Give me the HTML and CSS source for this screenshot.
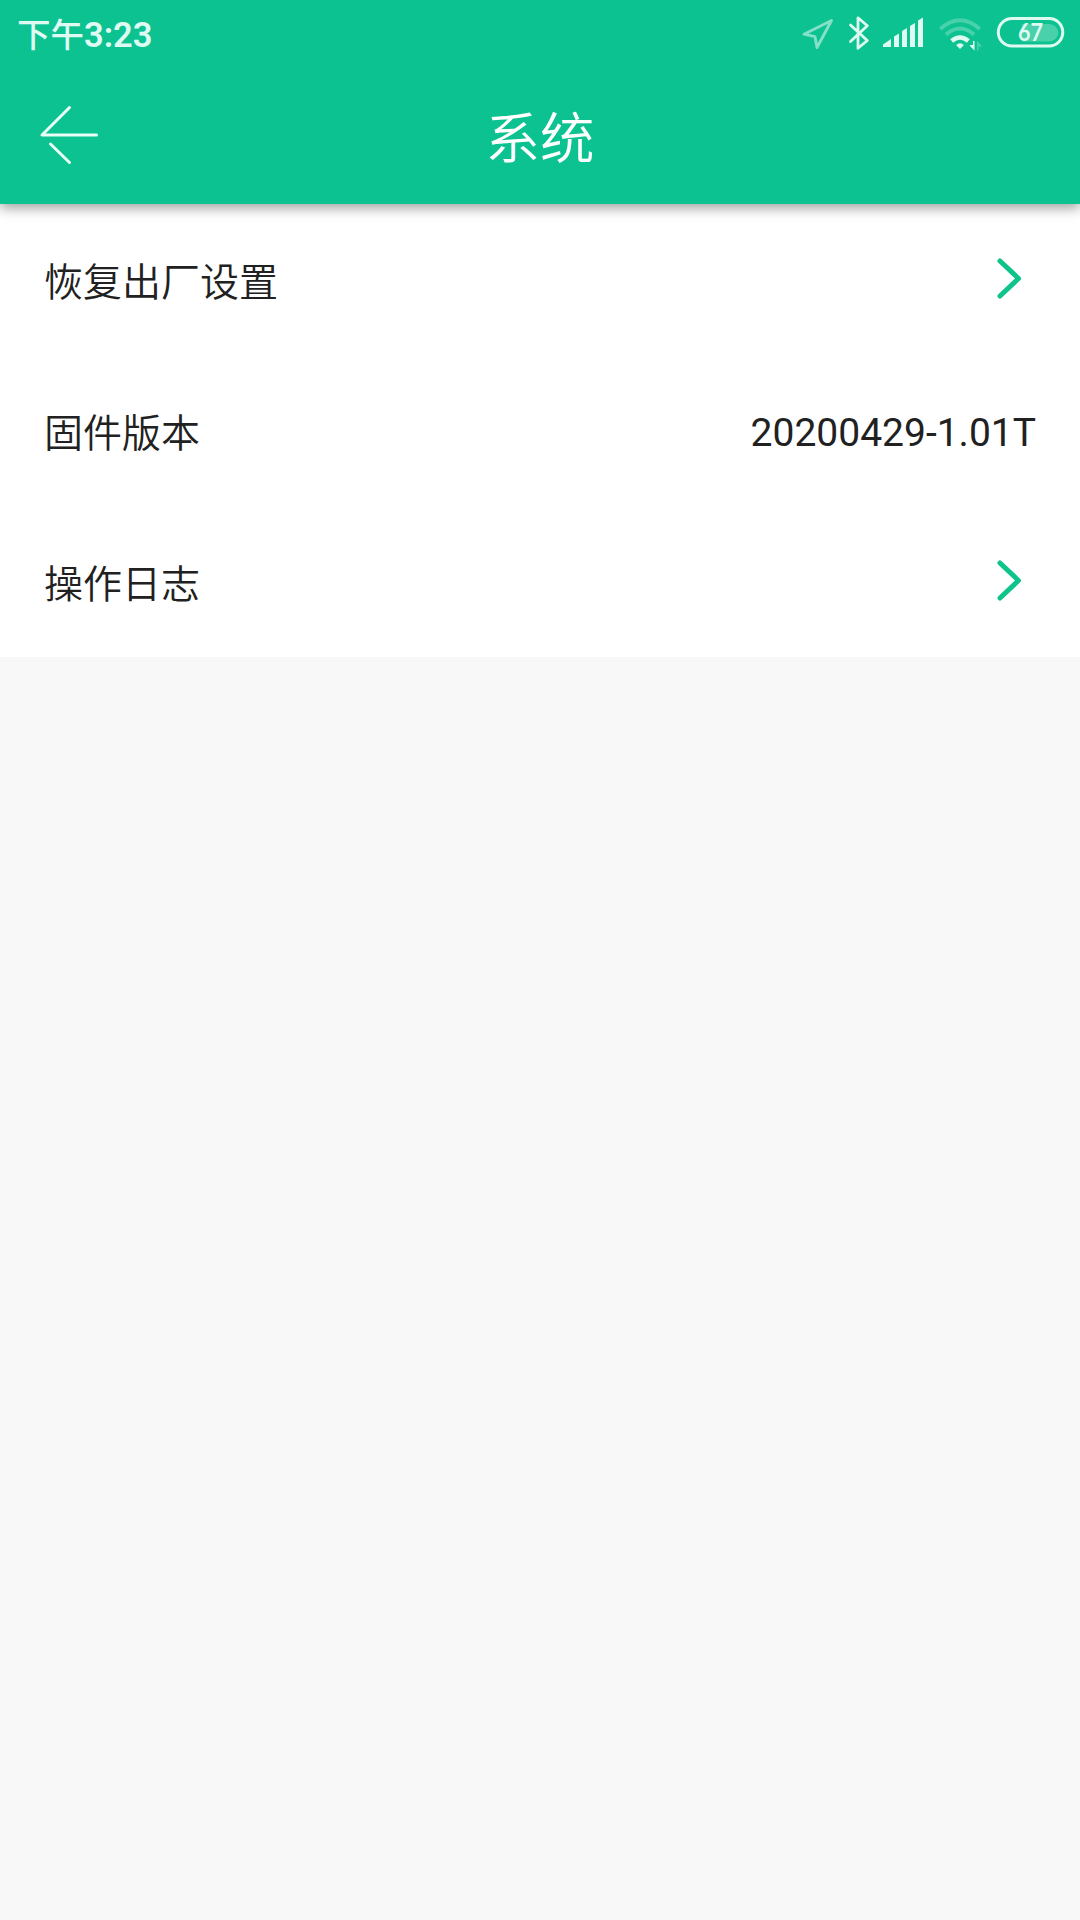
FILE: index.html
```html
<!DOCTYPE html>
<html lang="zh-CN">
<head>
<meta charset="utf-8">
<title>系统</title>
<link rel="stylesheet" href="styles.css">
</head>
<body>
<header class="header">
  <div class="status">
    <span class="time">下午<b class="digits">3:23</b></span>
    <svg class="status-icons" width="280" height="66" viewBox="0 0 280 66" fill="none">
      <path class="faint-line" d="M31.5 20.5 L4 34.2 L15 36.7 L17 47.5 Z" stroke-width="2.9" stroke-linejoin="round"/>
      <path class="line" d="M50.5 25 L67.3 40.5 L58 48.3 V17.8 L67.3 25.8 L50.5 41.5" stroke-width="2.8" stroke-linejoin="round" stroke-linecap="round"/>
      <path class="solid" d="M83 47 V44.5 L91 39 V47Z M94 47 V36.5 L99 33.5 V47Z M102 47 V31 L107 28 V47Z M110 47 V26 L115 23 V47Z M118 47 V20.5 L123 17.5 V47Z"/>
      <path class="dim-line" d="M140.300 29 Q160 11.500 179.700 29 M146 34.500 Q160 22.500 174 34.500" stroke-width="4"/>
      <path class="line" d="M151.700 41 Q160 34 168.300 41" stroke-width="4.500"/>
      <path class="solid" d="M156 45 Q160 41.500 164 45 L160 49Z M173 41 H174.500 V50.500 L170 46 V45 H173Z"/>
      <path class="dim" d="M177 41 L181.500 45.500 V46.500 H178.500 V50.500 H177Z"/>
      <path class="dim" d="M222 24 H249.500 A8.700 8.700 0 0 1 249.500 41.400 H222Z"/>
      <rect class="line" x="198.300" y="18.500" width="64.500" height="27.500" rx="13.700" stroke-width="3"/>
      <text class="charge" x="218" y="41" textLength="25" lengthAdjust="spacingAndGlyphs">67</text>
    </svg>
  </div>
  <div class="toolbar">
    <svg class="back" width="60" height="60" viewBox="0 0 60 60" fill="none" stroke="#eafff8" stroke-width="3" stroke-linecap="round" stroke-linejoin="round">
      <path d="M31.500 2.500 L4 30 H58.500 M12.500 39 L31.500 57.500"/>
    </svg>
    <h1 class="title">系统</h1>
  </div>
</header>
<main class="list">
  <div class="row">
    <span class="label">恢复出厂设置</span>
    <svg class="chevron" width="26" height="42" viewBox="0 0 26 42"><path d="M3 4 L21.500 21.500 L3 39"/></svg>
  </div>
  <div class="row">
    <span class="label">固件版本</span>
    <span class="value">20200429-1.01T</span>
  </div>
  <div class="row">
    <span class="label">操作日志</span>
    <svg class="chevron" width="26" height="42" viewBox="0 0 26 42"><path d="M3 4 L21.500 21.500 L3 39"/></svg>
  </div>
</main>
</body>
</html>
```
FILE: styles.css
```css
* { box-sizing: border-box; }
body {
  margin: 0;
  min-height: 1920px;
  background: #f8f8f8;
  font-family: Roboto, "Noto Sans CJK SC", sans-serif;
  color: #212121;
}
.header {
  position: relative;
  height: 204px;
  background: #0cc291;
  box-shadow: 0 4px 12px rgba(0, 0, 0, .38);
}
.status {
  height: 66px;
  display: flex;
  justify-content: space-between;
  padding-left: 17px;
}
.time {
  font-size: 33.5px;
  line-height: 70px;
  font-weight: 500;
  color: #dffaf1;
}
.digits { font-size: 34.5px; font-weight: 600; }
.line { stroke: #dffaf1; }
.solid { fill: #dffaf1; }
.faint-line { stroke: #84e0c7; }
.dim { fill: #49d1ab; }
.dim-line { stroke: #49d1ab; }
.charge {
  fill: #dffaf1;
  font: bold 25px Lato, sans-serif;
}
.toolbar {
  height: 138px;
  display: grid;
  grid-template-columns: 120px 1fr 120px;
}
.back { margin: 39px 0 0 38px; }
.title {
  margin: 0;
  text-align: center;
  font-size: 54.5px;
  line-height: 147px;
  font-weight: 350;
  color: #fff;
}
.list { background: #fff; }
.row {
  height: 151px;
  display: flex;
  justify-content: space-between;
  padding: 0 44px;
  font-size: 39px;
  line-height: 157px;
}
.label {
  font-weight: 350;
  line-height: 158px;
}
.chevron {
  margin: 53px 13px 0 0;
  fill: none;
  stroke: #0fc48b;
  stroke-width: 5;
  stroke-linecap: round;
  stroke-linejoin: round;
}
```
